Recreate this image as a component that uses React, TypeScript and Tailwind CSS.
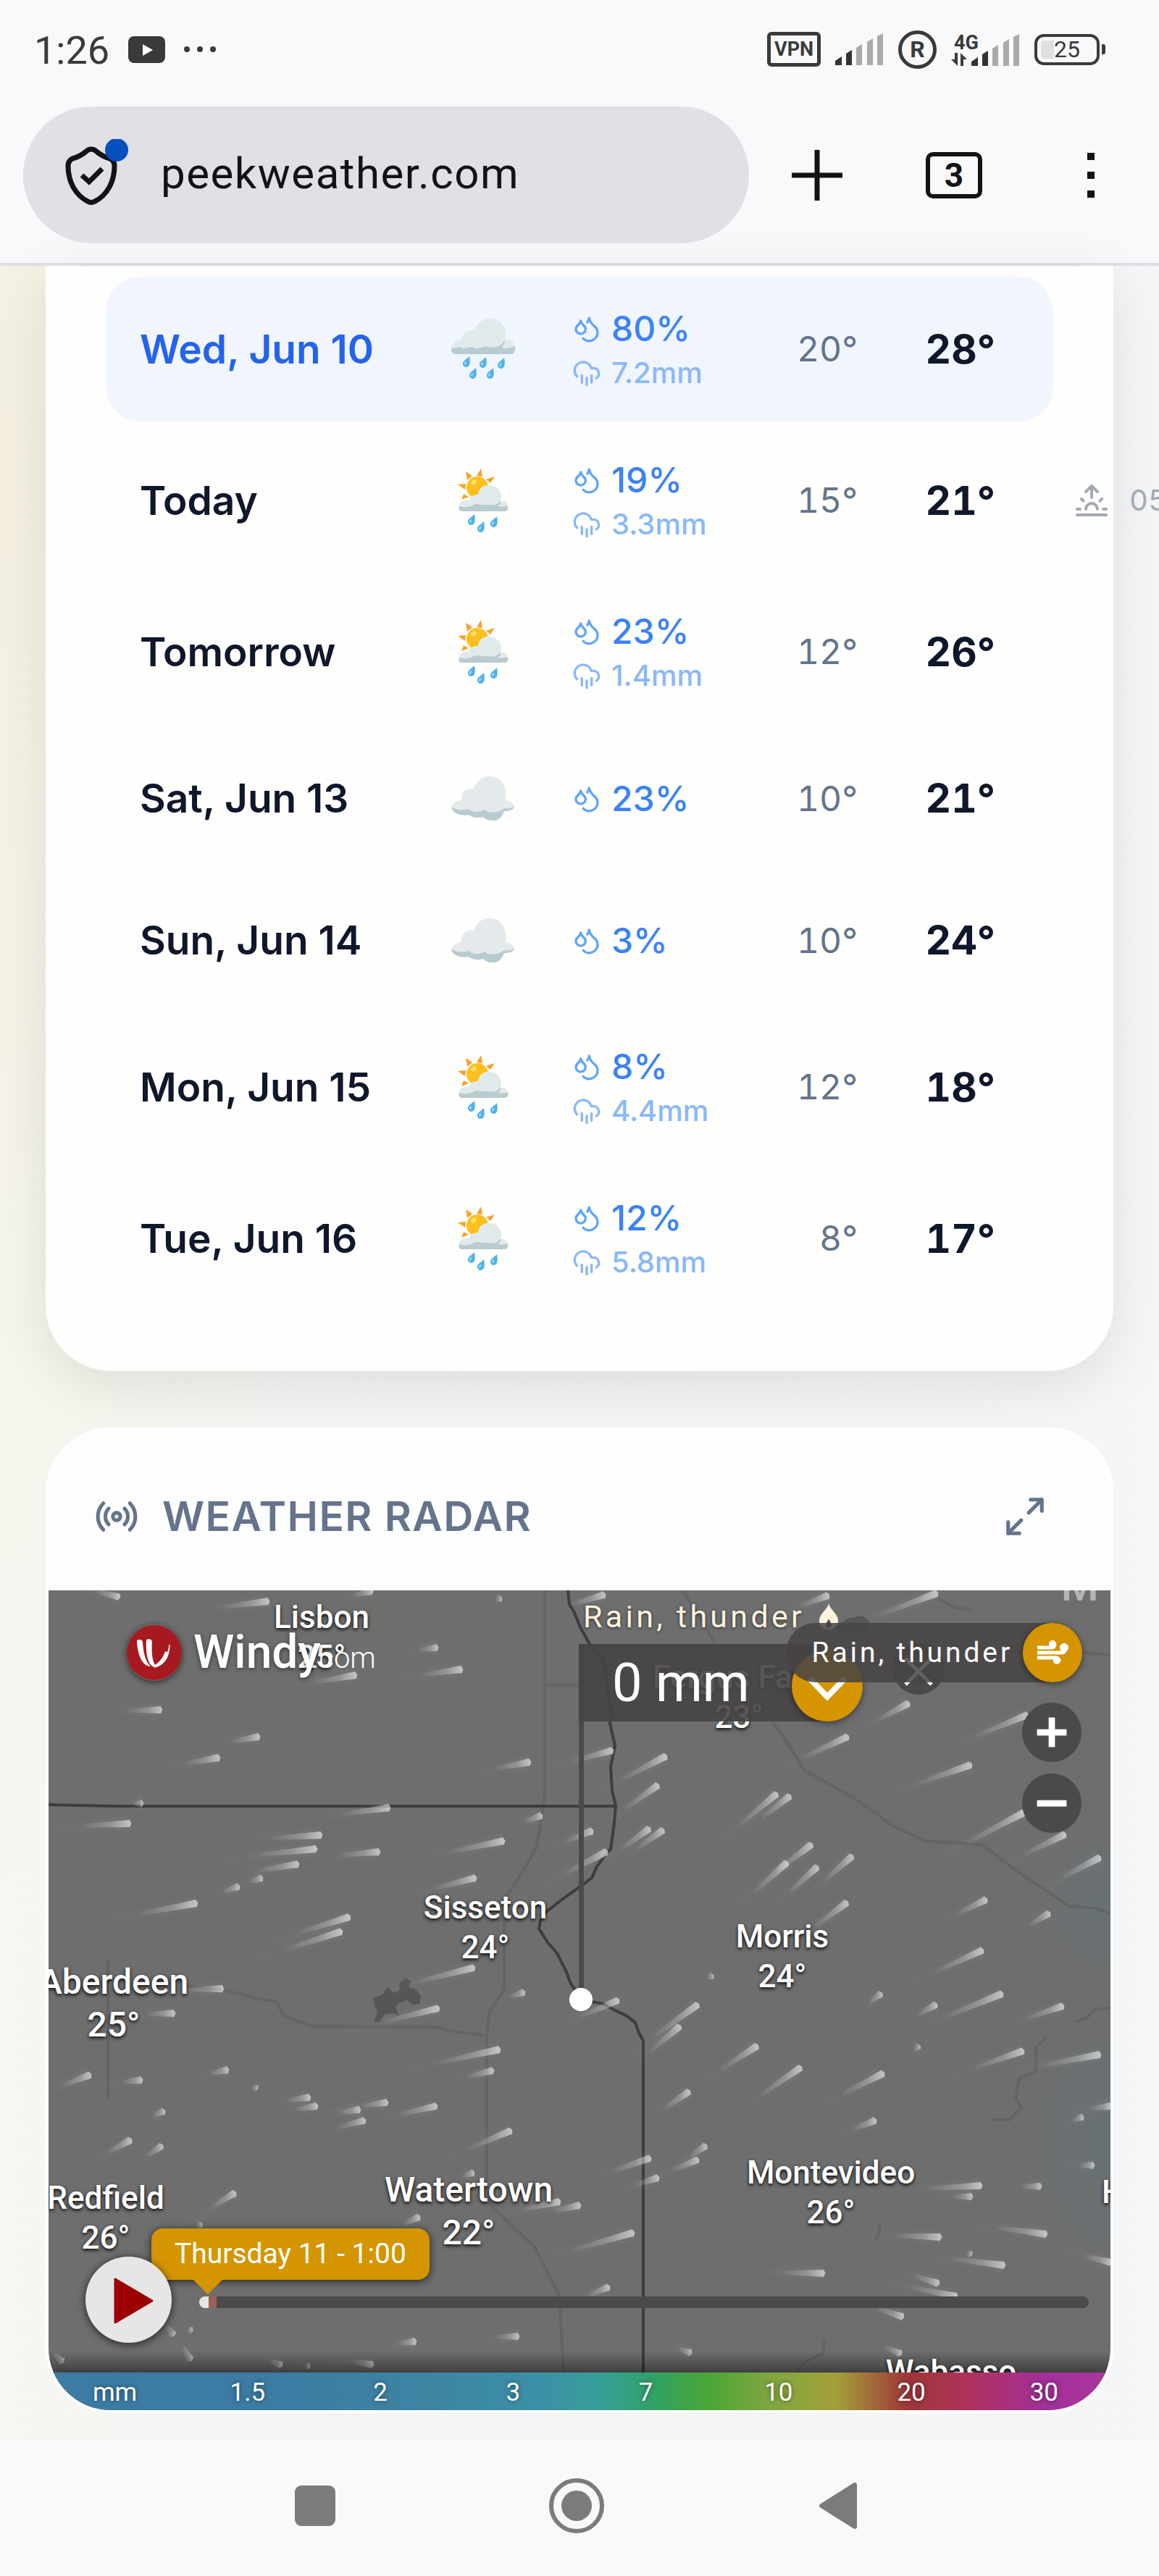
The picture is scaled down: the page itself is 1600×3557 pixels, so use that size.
import { CloudRain, Droplets, Maximize2, Minus, Plus, Radio, Sunrise } from "lucide-react";

type Sky = "rain" | "showers" | "cloud";

interface Day {
  name: string;
  sky: Sky;
  chance: string;
  amount?: string;
  low: string;
  high: string;
  sunrise?: string;
  active?: boolean;
}

const DAYS: Day[] = [
  { name: "Wed, Jun 10", sky: "rain", chance: "80%", amount: "7.2mm", low: "20°", high: "28°", active: true },
  { name: "Today", sky: "showers", chance: "19%", amount: "3.3mm", low: "15°", high: "21°", sunrise: "05" },
  { name: "Tomorrow", sky: "showers", chance: "23%", amount: "1.4mm", low: "12°", high: "26°" },
  { name: "Sat, Jun 13", sky: "cloud", chance: "23%", low: "10°", high: "21°" },
  { name: "Sun, Jun 14", sky: "cloud", chance: "3%", low: "10°", high: "24°" },
  { name: "Mon, Jun 15", sky: "showers", chance: "8%", amount: "4.4mm", low: "12°", high: "18°" },
  { name: "Tue, Jun 16", sky: "showers", chance: "12%", amount: "5.8mm", low: "8°", high: "17°" },
];

// Map canvas, all pins and lines below use these coordinates
const MAP = { x: 67, y: 2196, w: 1466, h: 1132 };

const PLACES = [
  { name: "Lisbon", temp: "25°", x: 444, y: 2261, size: "text-[44px] leading-[55px]" },
  { name: "Fergus Falls", temp: "23°", x: 1020, y: 2344, size: "text-[44px] leading-[55px]" },
  { name: "Sisseton", temp: "24°", x: 670, y: 2662, size: "text-[44px] leading-[55px]" },
  { name: "Morris", temp: "24°", x: 1080, y: 2702, size: "text-[44px] leading-[55px]" },
  { name: "Aberdeen", temp: "25°", x: 157, y: 2766, size: "text-[48px] leading-[59px]" },
  { name: "Redfield", temp: "26°", x: 146, y: 3063, size: "text-[44px] leading-[55px]" },
  { name: "Watertown", temp: "22°", x: 647, y: 3053, size: "text-[48px] leading-[59px]" },
  { name: "Montevideo", temp: "26°", x: 1147, y: 3028, size: "text-[44px] leading-[55px]" },
  { name: "Wabasso", temp: "", x: 1313, y: 3303, size: "text-[44px] leading-[55px]" },
];

// Wind particles: tail x, tail y, head x, head y
const STREAKS = [
  [130, 2197, 164, 2205], [307, 2219, 370, 2211], [487, 2203, 513, 2197], [684, 2209, 691, 2207],
  [579, 2278, 603, 2275], [581, 2313, 637, 2305], [433, 2323, 491, 2313], [176, 2362, 222, 2361],
  [319, 2405, 357, 2398], [256, 2435, 302, 2427], [685, 2442, 731, 2433], [184, 2491, 196, 2490],
  [472, 2505, 537, 2496], [113, 2521, 179, 2518], [724, 2515, 747, 2507], [375, 2538, 443, 2534],
  [351, 2562, 436, 2553], [470, 2562, 523, 2557], [622, 2557, 695, 2542], [356, 2583, 411, 2574],
  [344, 2599, 361, 2593], [308, 2612, 329, 2605], [191, 2643, 271, 2628], [598, 2608, 656, 2593],
  [409, 2670, 482, 2647], [394, 2692, 471, 2667], [570, 2738, 654, 2717], [259, 2747, 307, 2746],
  [203, 2781, 240, 2780], [704, 2757, 723, 2751], [529, 2792, 605, 2773], [800, 2785, 853, 2762],
  [606, 2848, 689, 2830], [644, 2868, 680, 2859], [86, 2880, 124, 2865], [170, 2875, 195, 2872],
  [290, 2863, 314, 2858], [349, 2881, 354, 2884], [211, 2922, 226, 2915], [397, 2900, 427, 2896],
  [407, 2913, 437, 2908], [499, 2908, 534, 2903], [468, 2917, 496, 2913], [468, 2937, 503, 2928],
  [550, 2920, 602, 2908], [149, 2972, 180, 2955], [203, 2977, 223, 2963], [647, 2967, 705, 2942],
  [292, 3048, 324, 3028], [639, 3005, 653, 3000], [718, 3052, 772, 3040], [764, 3053, 800, 3045],
  [557, 3072, 578, 3061], [790, 2215, 834, 2202], [1104, 2218, 1143, 2203], [1214, 2230, 1293, 2200],
  [1211, 2375, 1254, 2352], [1345, 2398, 1418, 2368], [1109, 2427, 1170, 2398], [790, 2432, 845, 2417],
  [858, 2457, 919, 2425], [1266, 2463, 1340, 2437], [864, 2497, 908, 2465], [1021, 2520, 1072, 2477],
  [1052, 2510, 1090, 2480], [858, 2553, 896, 2525], [879, 2553, 915, 2527], [780, 2543, 817, 2528],
  [780, 2587, 837, 2557], [1334, 2545, 1413, 2503], [1415, 2560, 1470, 2533], [1073, 2583, 1120, 2547],
  [1041, 2613, 1086, 2572], [1138, 2597, 1176, 2563], [1089, 2613, 1128, 2578], [1465, 2593, 1518, 2565],
  [1125, 2660, 1169, 2627], [1321, 2643, 1361, 2623], [1421, 2658, 1448, 2642], [977, 2731, 983, 2728],
  [1292, 2722, 1356, 2693], [1200, 2765, 1216, 2753], [1267, 2782, 1292, 2768], [1305, 2785, 1383, 2753],
  [1417, 2787, 1467, 2770], [902, 2813, 963, 2768], [897, 2833, 938, 2798], [996, 2857, 1045, 2825],
  [1050, 2893, 1105, 2855], [1162, 2892, 1219, 2863], [1346, 2855, 1412, 2832], [1438, 2852, 1518, 2837],
  [1262, 2831, 1268, 2825], [917, 2912, 951, 2888], [1178, 2940, 1208, 2928], [846, 2998, 897, 2980],
  [928, 2997, 963, 2982], [953, 2977, 974, 2963], [877, 3017, 908, 3007], [1481, 2928, 1494, 2923],
  [1489, 2990, 1509, 2990], [1280, 3022, 1354, 3018], [1410, 3019, 1436, 3019], [1315, 3033, 1341, 3033],
  [1504, 2912, 1533, 2908], [790, 3107, 874, 3083], [1235, 3087, 1298, 3089], [1376, 3076, 1444, 3085],
  [1313, 3119, 1386, 3128], [1335, 3110, 1340, 3113], [1261, 3142, 1295, 3153], [1256, 3158, 1320, 3171],
  [1211, 3188, 1246, 3199], [1222, 3241, 1243, 3250], [937, 3243, 953, 3249], [811, 3170, 840, 3158],
  [1078, 3138, 1137, 3139], [1497, 3115, 1533, 3124], [74, 3250, 86, 3261], [231, 3213, 239, 3224],
  [259, 3216, 264, 3218], [253, 3241, 263, 3258], [372, 3259, 388, 3266], [421, 3266, 426, 3268],
  [484, 3261, 514, 3265], [685, 3227, 715, 3226], [272, 3074, 277, 3071], [548, 3236, 573, 3233],
];

const SCALE = ["mm", "1.5", "2", "3", "7", "10", "20", "30"];

function Drop({ x, y }: { x: number; y: number }) {
  return (
    <g transform={`translate(${x} ${y})`}>
      <path d="M4 -8 C5 -3 5 1 4 4 C2 8 -4 8 -5 3 C-6 -1 0 -4 4 -8Z" fill="#4fb3ea" />
      <path d="M-3 2 C-3 0 -1 -1 0 -1 C0 2 -1 4 -2 4Z" fill="#a5dcf8" />
    </g>
  );
}

function SkyIcon({ sky }: { sky: Sky }) {
  if (sky === "rain") {
    return (
      <svg viewBox="0 0 88 84" className="mx-auto h-[84px] w-[88px]" role="img" aria-label="Rain">
        <path d="M6 49 C0 49 0 44 0 41 C1 33 8 29 14 29 C15 20 23 15 32 17 C35 6 43 0 53 0 C66 0 75 9 75 22 L74 29 C82 27 88 33 88 41 C88 45 87 49 82 49Z" fill="#e1eaeb" />
        <path d="M0 40 C5 43 9 37 15 40 C21 43 25 37 31 40 C38 44 45 36 51 39 C60 41 69 39 74 29 C74 34 72 37 69 39 C75 43 83 40 88 38 C88 45 87 49 82 49 L6 49 C0 49 0 44 0 40Z" fill="#b8cbcf" />
        <Drop x={21} y={60} />
        <Drop x={44} y={61} />
        <Drop x={69} y={62} />
        <Drop x={30} y={76} />
        <Drop x={54} y={76} />
      </svg>
    );
  }
  if (sky === "showers") {
    return (
      <svg viewBox="0 0 70 88" className="mx-auto h-[88px] w-[70px]" role="img" aria-label="Sun and showers">
        <g fill="#f9a02c">
          <path d="M11 4 L20 10 L13 16Z" />
          <path d="M32 0 L34 11 L26 10Z" />
          <path d="M51 11 L45 20 L39 15Z" />
          <path d="M0 22 L11 21 L10 29Z" />
          <path d="M5 43 L8 35 L15 39Z" />
        </g>
        <circle cx="27" cy="26" r="15" fill="#fcbf1d" />
        <ellipse cx="22" cy="19" rx="4" ry="3" fill="#fde16f" transform="rotate(-40 22 19)" />
        <path d="M5 59 C1 58 1 54 2 50 C5 44 10 43 15 44 C17 38 22 36 28 36 C29 27 36 22 43 23 C53 23 60 30 60 39 L59 46 C65 42 69 48 69 54 C69 58 67 59 64 59Z" fill="#e1eaeb" />
        <path d="M2 52 C8 54 14 54 20 51 C26 47 30 50 35 50 C44 50 54 53 59 44 C60 48 58 50 55 51 C60 54 66 52 69 51 C70 57 68 59 64 59 L6 59 C2 59 1 56 2 52Z" fill="#b8cbcf" />
        <Drop x={19} y={71} />
        <Drop x={32} y={81} />
        <Drop x={50} y={74} />
      </svg>
    );
  }
  return (
    <svg viewBox="0 0 88 62" className="mx-auto h-[62px] w-[88px]" role="img" aria-label="Cloudy">
      <path d="M0 43 C3 36 8 34 14 33 C13 22 20 15 31 17 C36 5 43 0 53 0 C68 0 77 11 75 33 C81 34 85 37 87 41 C86 47 80 48 73 48 C70 57 63 62 57 61 C51 61 47 59 44 56 C36 58 29 57 24 53 C12 55 2 51 0 43Z" fill="#e4e9ec" />
      <path d="M0 42 C8 48 17 47 24 45 C31 52 40 49 46 46 C54 53 67 49 73 44 C79 45 84 44 87 41 C86 47 80 48 73 48 C70 57 63 62 57 61 C51 61 47 59 44 56 C36 58 29 57 24 53 C12 55 1 51 0 42Z" fill="#b8cbcf" />
    </svg>
  );
}

function SignalBars() {
  return (
    <svg viewBox="0 0 67 44" className="h-[44px] w-[67px]" aria-hidden="true">
      <path d="M0 44 V38 L9 32 V44Z" fill="#333" />
      <path d="M15 44 V28 L23 23 V44Z" fill="#333" />
      <path d="M29 44 V20 L37 15 V44Z" fill="#aaa" />
      <path d="M44 44 V12 L52 7 V44Z" fill="#aaa" />
      <path d="M58 44 V4 L66 0 V44Z" fill="#aaa" />
    </svg>
  );
}

function StatusBar() {
  return (
    <div className="flex h-[136px] items-center justify-between pr-[74px] pl-[47px] text-[#3a3a3a]">
      <div className="flex items-center gap-[26px]">
        <span className="pt-1 text-[54px] leading-[60px]">1:26</span>
        <svg viewBox="0 0 51 37" className="h-[37px] w-[51px]" aria-label="YouTube" role="img">
          <rect width="51" height="37" rx="8" fill="#3a3a3a" />
          <path d="M20 11 L34 19 L20 27Z" fill="#fff" />
        </svg>
        <span className="flex gap-[10px]">
          <i className="size-2 rounded-full bg-[#3a3a3a]" />
          <i className="size-2 rounded-full bg-[#3a3a3a]" />
          <i className="size-2 rounded-full bg-[#3a3a3a]" />
        </span>
      </div>
      <div className="flex items-center gap-5">
        <span className="flex h-[48px] w-[74px] items-center justify-center rounded-[6px] border-[5px] border-[#3a3a3a] text-[27px] font-bold">VPN</span>
        <SignalBars />
        <span className="flex size-[53px] items-center justify-center rounded-full border-[5px] border-[#3a3a3a] text-[32px] font-bold">R</span>
        <span className="flex items-end">
          <span className="-mr-[26px] flex flex-col items-start">
            <span className="pl-1 text-[27px] leading-[28px] font-bold">4G</span>
            <svg viewBox="0 0 24 18" className="h-[18px] w-[24px]" fill="#3a3a3a" aria-hidden="true">
              <path d="M5 0 H9 V18 L0 9 H5Z" />
              <path d="M13 18 V0 L22 9 H17 V18Z" />
            </svg>
          </span>
          <span className="ml-4">
            <SignalBars />
          </span>
        </span>
        <span className="flex items-center gap-[3px]">
          <span className="flex h-[43px] w-[90px] items-center rounded-[13px] border-4 border-[#3a3a3a] pl-[5px]">
            <span className="h-[25px] w-[18px] rounded-l-[4px] bg-[#dfdfdf]" />
            <span className="text-[32px] leading-[34px]">25</span>
          </span>
          <span className="h-[14px] w-[5px] rounded-r-[3px] bg-[#3a3a3a]" />
        </span>
      </div>
    </div>
  );
}

function BrowserBar() {
  return (
    <div className="flex border-b-4 border-[#e0dfe5] pt-[11px] pb-[27px] pl-8">
      <div className="flex h-[189px] flex-1 items-center rounded-full bg-[#e1e0e5] pl-[53px]">
        <button type="button" aria-label="Site information" className="shrink-0">
          <svg viewBox="0 0 96 100" className="h-[100px] w-[96px]" fill="none">
            <path d="M41 14 Q37 14 34 17 Q26 24 15 27 Q9 30 9 37 C9 60 20 78 36 86 Q41 89 46 86 C62 78 73 60 73 37 Q73 30 67 27 Q56 24 48 17 Q45 14 41 14Z" stroke="#131316" strokeWidth="7" />
            <path d="M28 50 L38 59 L56 41" stroke="#131316" strokeWidth="7" />
            <circle cx="76" cy="15" r="16" fill="#0450bd" />
          </svg>
        </button>
        <input
          type="text"
          aria-label="Address"
          defaultValue="peekweather.com"
          className="ml-[41px] w-full min-w-0 bg-transparent pb-1 text-[60px] leading-[80px] tracking-wide text-[#131316] outline-none"
        />
      </div>
      <div className="grid w-[566px] grid-cols-3 place-items-center">
        <button type="button" aria-label="New tab" className="text-[#131316]">
          <svg viewBox="0 0 70 70" className="size-[70px]" stroke="currentColor" strokeWidth="7">
            <path d="M35 0V70M0 35H70" />
          </svg>
        </button>
        <button type="button" aria-label="Tabs" className="flex h-[64px] w-[78px] items-center justify-center rounded-[10px] border-[6px] border-[#131316] text-[46px] leading-none font-bold text-[#131316]">
          3
        </button>
        <button type="button" aria-label="Menu" className="flex flex-col gap-4">
          <i className="size-[10px] bg-[#131316]" />
          <i className="size-[10px] bg-[#131316]" />
          <i className="size-[10px] bg-[#131316]" />
        </button>
      </div>
    </div>
  );
}

function ForecastRow({ day }: { day: Day }) {
  const tint = day.active ? "bg-[#f1f5fe]" : "";
  return (
    <tr className={day.amount ? "h-[200px]" : "h-[187px]"}>
      <th
        scope="row"
        className={`${tint} rounded-l-[48px] p-0 pl-[47px] text-left text-[55px] font-semibold whitespace-nowrap ${day.active ? "text-[#2563eb]" : "text-[#0f172a]"}`}
      >
        {day.name}
      </th>
      <td className={`${tint} p-0`}>
        <SkyIcon sky={day.sky} />
      </td>
      <td className={`${tint} p-0 pl-[44px]`}>
        <div className="flex items-center gap-[14px] text-[48px] leading-[66px] font-medium text-[#3b82f6]">
          <Droplets className="size-[40px] text-[#60a5fa]" />
          {day.chance}
        </div>
        {day.amount && (
          <div className="flex items-center gap-[14px] text-[40px] leading-[56px] font-medium text-[#8ab8f8]">
            <CloudRain className="size-[40px]" />
            {day.amount}
          </div>
        )}
      </td>
      <td className={`${tint} p-0 text-right text-[48px] text-[#64748b] tabular-nums`}>{day.low}</td>
      <td className={`${tint} relative rounded-r-[48px] p-0 pr-[80px] text-right text-[55px] font-bold text-[#0f172a] tabular-nums`}>
        {day.high}
        {day.sunrise && (
          <span className="absolute inset-y-0 left-full flex items-center gap-[28px] pl-[29px] text-[40px] font-normal text-[#a3a9b4]">
            <Sunrise className="size-[48px]" />
            {day.sunrise}
          </span>
        )}
      </td>
    </tr>
  );
}

function WindMap() {
  return (
    <svg viewBox={`${MAP.x} ${MAP.y} ${MAP.w} ${MAP.h}`} preserveAspectRatio="none" className="absolute inset-0 h-full w-full" aria-hidden="true">
      <defs>
        <linearGradient id="trail">
          <stop offset="0" stopColor="#fff" stopOpacity="0.02" />
          <stop offset="0.6" stopColor="#fff" stopOpacity="0.25" />
          <stop offset="1" stopColor="#fff" stopOpacity="0.6" />
        </linearGradient>
        <radialGradient id="drizzle">
          <stop offset="0" stopColor="#5f7680" stopOpacity="0.4" />
          <stop offset="1" stopColor="#5f7680" stopOpacity="0" />
        </radialGradient>
        <linearGradient id="foot" x1="0" y1="0" x2="0" y2="1">
          <stop offset="0" stopColor="#000" stopOpacity="0" />
          <stop offset="1" stopColor="#000" stopOpacity="0.45" />
        </linearGradient>
      </defs>
      <rect x="67" y="2196" width="1466" height="1132" fill="#6e6e6e" />
      <ellipse cx="1540" cy="2630" rx="110" ry="120" fill="url(#drizzle)" />
      <ellipse cx="1540" cy="2960" rx="130" ry="200" fill="url(#drizzle)" />

      {/* lakes */}
      <g fill="#565656">
        <path d="M515 2760 L528 2754 L535 2744 L544 2752 L552 2748 L551 2738 L560 2732 L567 2735 L564 2744 L574 2747 L581 2757 L579 2767 L570 2768 L562 2762 L551 2766 L546 2772 L552 2784 L543 2780 L531 2781 L524 2792 L516 2792 L521 2779 L517 2768Z" />
        <path d="M1155 2247 L1170 2235 L1190 2231 L1200 2238 L1196 2250 L1160 2256Z" />
      </g>

      {/* roads and rivers */}
      <g fill="none" stroke="#646464" strokeWidth="4">
        <path d="M752 2196 V2480 L741 2550 L723 2582 L700 2617 L696 2660 V2747 L676 2777 L672 2810 V3040 L738 3103 L772 3170 L778 3276" />
        <path d="M753 2327 H799M149 2707 V2897" />
        <path d="M259 2742 L310 2748 L356 2760 L381 2763 L392 2783 L410 2791 L432 2798 L601 2799 L626 2805 L667 2810" />
        <path d="M1065 2377 L1083 2400 L1109 2443 L1151 2467 L1180 2484 L1214 2507 L1230 2520 L1277 2542 L1355 2547 L1413 2590 L1476 2632 L1512 2635 L1533 2642" />
        <path d="M942 2196 L960 2223 L987 2268M1293 2207 L1319 2220 L1342 2223M1494 2282 L1533 2285" />
        <path d="M1445 2813 L1430 2827 V2860 L1407 2870 L1402 2897 L1410 2910 L1394 2927 L1369 2927M1533 2772 L1512 2775 L1500 2786 L1486 2792" />
        <path d="M1214 3070 V3085 L1208 3092M1138 3230 L1136 3250 L1110 3262 L1100 3276" />
      </g>

      {/* state borders */}
      <g fill="none" stroke="#3d3d3d" strokeWidth="4">
        <path d="M67 2492 L160 2494 H850" />
        <path d="M784 2196 L786 2215 L793 2227 L801 2247 L811 2265 L818 2277 L832 2288 L836 2307 L839 2337 L845 2367 L842 2380 L849 2410 L843 2440 L845 2473 L850 2493 L848 2517 L843 2553 L837 2560 L824 2577 L817 2593 L801 2605 L777 2622 L754 2640 L746 2652 L744 2663 L756 2682 L769 2697 L782 2723 L787 2737 L802 2761 L833 2767 L851 2777 L866 2784 L877 2793 L882 2807 L888 2818 V3276" />
      </g>

      {STREAKS.map(([x1, y1, x2, y2]) => {
        const len = Math.hypot(x2 - x1, y2 - y1);
        const nx = (-(y2 - y1) / len) * 5;
        const ny = ((x2 - x1) / len) * 5;
        const fx = x2 - (x2 - x1) * 3;
        const fy = y2 - (y2 - y1) * 3;
        return (
          <g key={`${x1}-${y1}`} fill="url(#trail)">
            <path d={`M${fx} ${fy} L${x2 + nx * 2} ${y2 + ny * 2} L${x2 - nx * 2} ${y2 - ny * 2}Z`} opacity="0.05" />
            <path d={`M${x1 + nx / 2} ${y1 + ny / 2} L${x2 + nx} ${y2 + ny} L${x2 + ny / 2} ${y2 - nx / 2} L${x2 - nx} ${y2 - ny} L${x1 - nx / 2} ${y1 - ny / 2}Z`} />
          </g>
        );
      })}
      <rect x="67" y="3246" width="1466" height="32" fill="url(#foot)" />
    </svg>
  );
}

function Place({ place }: { place: (typeof PLACES)[number] }) {
  return (
    <div
      className={`absolute -translate-x-1/2 -translate-y-1/2 text-center font-medium whitespace-nowrap text-white [text-shadow:0_2px_5px_#000] ${place.size}`}
      style={{
        left: `${((place.x - MAP.x) / MAP.w) * 100}%`,
        top: `${((place.y - MAP.y) / MAP.h) * 100}%`,
      }}
    >
      {place.name}
      <br />
      {place.temp || "\u00a0"}
    </div>
  );
}

function RadarMap() {
  return (
    <div className="relative h-[1132px] overflow-hidden rounded-b-[86px] font-[Roboto,sans-serif]">
      <WindMap />
      {PLACES.map((place) => (
        <Place key={place.name} place={place} />
      ))}
      <span className="absolute top-[-40px] right-[16px] text-[60px] leading-[68px] font-medium text-[#b4b4b4]">M</span>
      <span className="absolute top-[804px] left-[1454px] text-[44px] leading-[55px] font-medium whitespace-nowrap text-white [text-shadow:0_2px_5px_#000]">H</span>

      <a href="#windy" className="absolute top-[47px] left-[108px] flex items-center text-white">
        <svg viewBox="0 0 76 78" className="h-[78px] w-[76px] rounded-full shadow-[0_2px_8px_rgba(0,0,0,0.6)]" aria-hidden="true">
          <circle cx="38" cy="39" r="38" fill="#a6191f" />
          <path d="M14 22 C18 20 22 21 22 25 C23 40 26 52 33 58 C20 58 14 38 14 22Z" fill="#fff" />
          <path d="M27 21 C32 19 35 21 35 25 C34 40 35 52 41 59 C28 60 26 38 27 21Z" fill="#fff" />
          <path d="M59 28 C57 42 50 55 37 59 C52 58 59 44 59 28Z" fill="#fff" stroke="#fff" strokeWidth="1" />
          <path d="M55 38 C51 49 45 55 39 58" stroke="#fff" strokeWidth="4" fill="none" />
        </svg>
        <span className="ml-4 text-[64px] leading-[78px] font-medium [text-shadow:0_2px_6px_rgba(0,0,0,0.5)]">Windy</span>
        <span className="-ml-3 pt-[16px] text-[40px] font-light">.com</span>
      </a>

      {/* picker on the selected point */}
      <div className="absolute top-[74px] left-[732px] h-[475px] w-[7px] bg-[#4b4949]" />
      <div className="absolute top-[549px] left-[719px] size-8 rounded-full bg-white" />
      <div className="absolute top-[10px] left-[738px] flex items-center gap-5 text-[43px] leading-[52px] tracking-widest text-[#fdf3dd] [text-shadow:0_1px_4px_rgba(0,0,0,0.6)]">
        Rain, thunder
        <svg viewBox="0 0 26 36" className="h-[36px] w-[26px]" aria-hidden="true">
          <path d="M13 0 C15 9 26 14 26 24 C26 32 20 36 13 36 C6 36 0 32 0 24 C0 14 11 9 13 0Z" fill="#fdf3dd" />
          <path d="M13 21 C14 25 17 26 17 30 C17 35 9 35 9 30 C9 26 12 25 13 21Z" fill="#4b4949" />
        </svg>
      </div>
      <div className="absolute top-[74px] left-[732px] flex h-[107px] w-[343px] items-center bg-[#464344]/90 pl-[46px] text-[74px] text-white">0 mm</div>
      <button type="button" aria-label="Forecast detail" className="absolute top-[83px] left-[1026px] flex size-[98px] items-center justify-center rounded-full bg-[#d49500] shadow-[0_2px_10px_rgba(0,0,0,0.5)]">
        <svg viewBox="0 0 54 34" className="mt-2 h-[34px] w-[54px]" fill="none" stroke="#fff" strokeWidth="8">
          <path d="M3 3 L27 28 L51 3" />
        </svg>
      </button>
      <button type="button" aria-label="Close picker" className="absolute top-[72px] left-[1165px] flex size-[72px] items-center justify-center rounded-full bg-[#4b4949]">
        <svg viewBox="0 0 40 40" className="mt-2 size-10" stroke="#fff" strokeWidth="5">
          <path d="M2 2 L38 38M38 2 L2 38" />
        </svg>
      </button>

      {/* layer switch and zoom */}
      <button type="button" className="absolute top-[45px] right-[39px] flex h-[82px] items-center gap-[14px] rounded-full bg-[#464344]/85 pl-[36px] text-[39px] tracking-widest text-white">
        Rain, thunder
        <span className="flex size-[82px] items-center justify-center rounded-full bg-[#d49500] shadow-[0_2px_8px_rgba(0,0,0,0.5)]">
          <svg viewBox="0 0 44 34" className="h-[34px] w-[44px]" fill="none" stroke="#fff" strokeWidth="5">
            <path d="M1 10 H20 Q25 10 25 5M1 17 H34 Q40 17 40 10M1 24 H26 Q31 24 31 29" />
            <g fill="#fff" stroke="none">
              <circle cx="22" cy="5" r="5" />
              <circle cx="38" cy="10" r="6" />
              <circle cx="28" cy="28" r="5" />
            </g>
          </svg>
        </span>
      </button>
      <div className="absolute top-[155px] right-[40px] flex flex-col gap-4 text-white">
        <button type="button" aria-label="Zoom in" className="flex size-[82px] items-center justify-center rounded-full bg-[#4b4949]">
          <Plus className="size-[70px]" strokeWidth={3} strokeLinecap="butt" />
        </button>
        <button type="button" aria-label="Zoom out" className="flex size-[82px] items-center justify-center rounded-full bg-[#4b4949]">
          <Minus className="size-[70px]" strokeWidth={3} strokeLinecap="butt" />
        </button>
      </div>

      {/* timeline */}
      <input
        type="range"
        aria-label="Forecast time"
        min={0}
        max={240}
        defaultValue={2}
        className="absolute right-[30px] bottom-[141px] left-[208px] h-4 appearance-none rounded-full bg-[linear-gradient(90deg,#e6e6e6_0_13px,#9a6353_13px_24px,#4b4949_24px)] [&::-webkit-slider-thumb]:size-0 [&::-webkit-slider-thumb]:appearance-none"
      />
      <div className="absolute top-[881px] left-[142px] rounded-[16px] bg-[#d49500] px-8 text-[39px] leading-[71px] text-white shadow-[0_2px_12px_rgba(0,0,0,0.7)]">
        Thursday 11 - 1:00
        <svg viewBox="0 0 40 20" className="absolute top-full left-[58px] h-5 w-10" aria-hidden="true">
          <path d="M0 0 H40 L20 20Z" fill="#d49500" />
        </svg>
      </div>
      <button type="button" aria-label="Play" className="absolute top-[920px] left-[51px] size-[119px] rounded-full bg-[#e6e6e6] shadow-[0_2px_12px_rgba(0,0,0,0.7)]">
        <svg viewBox="0 0 119 119" className="size-full">
          <path d="M41 31 L92 61 L41 91Z" fill="#9c0000" stroke="#9c0000" strokeWidth="3" strokeLinejoin="round" />
        </svg>
      </button>

      <div className="absolute inset-x-0 bottom-0 grid h-[52px] grid-cols-8 bg-[linear-gradient(90deg,#3c7ca4_0%,#3c7ba3_20%,#3d84a2_36%,#3b90a6_46%,#379f98_52%,#30a266_57%,#4aa536_62%,#80a640_68%,#a3a13a_74%,#9f3638_81%,#b0315f_87%,#a2309a_94%,#a9379b_100%)] text-center text-[35px] leading-[56px] text-white [text-shadow:0_0_6px_rgba(0,0,0,0.5)]">
        {SCALE.map((mark) => (
          <span key={mark}>{mark}</span>
        ))}
      </div>
    </div>
  );
}

function NavigationBar() {
  return (
    <nav className="flex h-[187px] items-center justify-center gap-[285px] bg-[#f9f9fb] pr-2 pb-2">
      <button type="button" aria-label="Recent apps" className="flex size-[76px] items-center justify-center">
        <i className="size-14 rounded-[9px] bg-[#7b7b7b]" />
      </button>
      <button type="button" aria-label="Home" className="flex size-[76px] items-center justify-center rounded-full border-[6px] border-[#7b7b7b]">
        <i className="size-[42px] rounded-full bg-[#7b7b7b]" />
      </button>
      <button type="button" aria-label="Back" className="flex size-[76px] items-center justify-center">
        <svg viewBox="0 0 54 66" className="h-[66px] w-[54px]">
          <path d="M50 4 V62 L4 33Z" fill="#7b7b7b" stroke="#7b7b7b" strokeWidth="6" strokeLinejoin="round" />
        </svg>
      </button>
    </nav>
  );
}

export default function App() {
  return (
    <div className="overflow-hidden bg-[#f9f9fb] font-[Inter,sans-serif]">
      <header className="font-[Roboto,sans-serif]">
        <StatusBar />
        <BrowserBar />
      </header>

      <main className="bg-[radial-gradient(ellipse_30%_70%_at_0%_10%,#f5f0e0_0%,#f6f6ee_60%,transparent_100%),linear-gradient(90deg,#f6f6f3,#f4f4f5_50%,#f4f6f8)] px-[63px] pb-[38px]">
        <section aria-label="Daily forecast" className="rounded-b-[90px] bg-[#fefefd] px-[83px] pt-[6px] pb-[74px] shadow-[0_20px_80px_rgba(0,0,0,0.1)]">
          <table className="w-full table-fixed border-separate border-spacing-x-0 border-spacing-y-[9px]">
            <colgroup>
              <col />
              <col className="w-[158px]" />
              <col className="w-[304px]" />
              <col className="w-[134px]" />
              <col className="w-[270px]" />
            </colgroup>
            <tbody>
              {DAYS.map((day) => (
                <ForecastRow key={day.name} day={day} />
              ))}
            </tbody>
          </table>
        </section>

        <section className="relative mt-[78px] rounded-[90px] border-4 border-white bg-[#fdfdfd]">
          <div className="flex h-[221px] items-center justify-between pt-4 pr-[87px] pl-[63px] text-[#64748b]">
            <h2 className="flex items-center gap-8 text-[57px] font-semibold tracking-wide">
              <Radio className="size-[62px]" />
              WEATHER RADAR
            </h2>
            <button type="button" aria-label="Expand radar">
              <Maximize2 className="size-[62px]" />
            </button>
          </div>
          <RadarMap />
        </section>
      </main>

      <NavigationBar />
    </div>
  );
}
